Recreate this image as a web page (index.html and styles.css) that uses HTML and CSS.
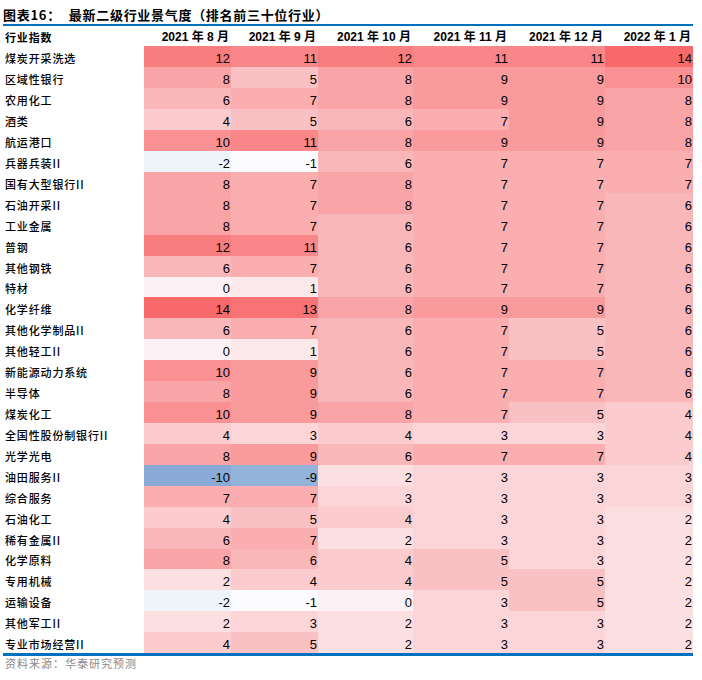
FILE: index.html
```html
<!DOCTYPE html>
<html lang="zh-CN">
<head>
<meta charset="utf-8">
<title>最新二级行业景气度</title>
<link rel="stylesheet" href="styles.css">
</head>
<body>
<div class="page">
  <div class="title"><span class="fig">图表16：</span><span>最新二级行业景气度（排名前三十位行业）</span></div>
  <div class="rule top"></div>
  <div class="grid">
    <div class="hd lb">行业指数</div><div class="hd">2021 年 8 月</div><div class="hd">2021 年 9 月</div><div class="hd">2021 年 10 月</div><div class="hd">2021 年 11 月</div><div class="hd">2021 年 12 月</div><div class="hd">2022 年 1 月</div>

    <div class="lb">煤炭开采洗选</div><div class="c v12">12</div><div class="c v11">11</div><div class="c v12">12</div><div class="c v11">11</div><div class="c v11">11</div><div class="c v14">14</div>
    <div class="lb">区域性银行</div><div class="c v8">8</div><div class="c v5">5</div><div class="c v8">8</div><div class="c v9">9</div><div class="c v9">9</div><div class="c v10">10</div>
    <div class="lb">农用化工</div><div class="c v6">6</div><div class="c v7">7</div><div class="c v8">8</div><div class="c v9">9</div><div class="c v9">9</div><div class="c v8">8</div>
    <div class="lb">酒类</div><div class="c v4">4</div><div class="c v5">5</div><div class="c v6">6</div><div class="c v7">7</div><div class="c v9">9</div><div class="c v8">8</div>
    <div class="lb">航运港口</div><div class="c v10">10</div><div class="c v11">11</div><div class="c v8">8</div><div class="c v9">9</div><div class="c v9">9</div><div class="c v8">8</div>
    <div class="lb">兵器兵装II</div><div class="c vm2">-2</div><div class="c vm1">-1</div><div class="c v6">6</div><div class="c v7">7</div><div class="c v7">7</div><div class="c v7">7</div>
    <div class="lb">国有大型银行II</div><div class="c v8">8</div><div class="c v7">7</div><div class="c v8">8</div><div class="c v7">7</div><div class="c v7">7</div><div class="c v7">7</div>
    <div class="lb">石油开采II</div><div class="c v8">8</div><div class="c v7">7</div><div class="c v8">8</div><div class="c v7">7</div><div class="c v7">7</div><div class="c v6">6</div>
    <div class="lb">工业金属</div><div class="c v8">8</div><div class="c v7">7</div><div class="c v6">6</div><div class="c v7">7</div><div class="c v7">7</div><div class="c v6">6</div>
    <div class="lb">普钢</div><div class="c v12">12</div><div class="c v11">11</div><div class="c v6">6</div><div class="c v7">7</div><div class="c v7">7</div><div class="c v6">6</div>
    <div class="lb">其他钢铁</div><div class="c v6">6</div><div class="c v7">7</div><div class="c v6">6</div><div class="c v7">7</div><div class="c v7">7</div><div class="c v6">6</div>
    <div class="lb">特材</div><div class="c v0">0</div><div class="c v1">1</div><div class="c v6">6</div><div class="c v7">7</div><div class="c v7">7</div><div class="c v6">6</div>
    <div class="lb">化学纤维</div><div class="c v14">14</div><div class="c v13">13</div><div class="c v8">8</div><div class="c v9">9</div><div class="c v9">9</div><div class="c v6">6</div>
    <div class="lb">其他化学制品II</div><div class="c v6">6</div><div class="c v7">7</div><div class="c v6">6</div><div class="c v7">7</div><div class="c v5">5</div><div class="c v6">6</div>
    <div class="lb">其他轻工II</div><div class="c v0">0</div><div class="c v1">1</div><div class="c v6">6</div><div class="c v7">7</div><div class="c v5">5</div><div class="c v6">6</div>
    <div class="lb">新能源动力系统</div><div class="c v10">10</div><div class="c v9">9</div><div class="c v6">6</div><div class="c v7">7</div><div class="c v7">7</div><div class="c v6">6</div>
    <div class="lb">半导体</div><div class="c v8">8</div><div class="c v9">9</div><div class="c v6">6</div><div class="c v7">7</div><div class="c v7">7</div><div class="c v6">6</div>
    <div class="lb">煤炭化工</div><div class="c v10">10</div><div class="c v9">9</div><div class="c v8">8</div><div class="c v7">7</div><div class="c v5">5</div><div class="c v4">4</div>
    <div class="lb">全国性股份制银行II</div><div class="c v4">4</div><div class="c v3">3</div><div class="c v4">4</div><div class="c v3">3</div><div class="c v3">3</div><div class="c v4">4</div>
    <div class="lb">光学光电</div><div class="c v8">8</div><div class="c v9">9</div><div class="c v6">6</div><div class="c v7">7</div><div class="c v7">7</div><div class="c v4">4</div>
    <div class="lb">油田服务II</div><div class="c vm10">-10</div><div class="c vm9">-9</div><div class="c v2">2</div><div class="c v3">3</div><div class="c v3">3</div><div class="c v3">3</div>
    <div class="lb">综合服务</div><div class="c v7">7</div><div class="c v7">7</div><div class="c v3">3</div><div class="c v3">3</div><div class="c v3">3</div><div class="c v3">3</div>
    <div class="lb">石油化工</div><div class="c v4">4</div><div class="c v5">5</div><div class="c v4">4</div><div class="c v3">3</div><div class="c v3">3</div><div class="c v2">2</div>
    <div class="lb">稀有金属II</div><div class="c v6">6</div><div class="c v7">7</div><div class="c v2">2</div><div class="c v3">3</div><div class="c v3">3</div><div class="c v2">2</div>
    <div class="lb">化学原料</div><div class="c v8">8</div><div class="c v6">6</div><div class="c v4">4</div><div class="c v5">5</div><div class="c v3">3</div><div class="c v2">2</div>
    <div class="lb">专用机械</div><div class="c v2">2</div><div class="c v4">4</div><div class="c v4">4</div><div class="c v5">5</div><div class="c v5">5</div><div class="c v2">2</div>
    <div class="lb">运输设备</div><div class="c vm2">-2</div><div class="c vm1">-1</div><div class="c v0">0</div><div class="c v3">3</div><div class="c v5">5</div><div class="c v2">2</div>
    <div class="lb">其他军工II</div><div class="c v2">2</div><div class="c v3">3</div><div class="c v2">2</div><div class="c v3">3</div><div class="c v3">3</div><div class="c v2">2</div>
    <div class="lb">专业市场经营II</div><div class="c v4">4</div><div class="c v5">5</div><div class="c v2">2</div><div class="c v3">3</div><div class="c v3">3</div><div class="c v2">2</div>
  </div>
  <div class="rule bottom"></div>
  <div class="source">资料来源：华泰研究预测</div>
</div>
</body>
</html>
```

FILE: styles.css
```css
* { box-sizing: border-box; }
html, body { margin: 0; padding: 0; background: #fff; }
.page {
  width: 702px;
  padding-left: 3px;
  font-family: "Liberation Sans", Arial, "Noto Sans CJK SC", sans-serif;
  color: #000;
}
.title {
  height: 24px;
  padding-top: 6px;
  line-height: 18px;
  font-family: "Noto Sans CJK SC", sans-serif;
  font-size: 13px;
  font-weight: 700;
  letter-spacing: 0.7px;
  white-space: nowrap;
}
.title .fig { margin-right: 8px; }
.rule { width: 690px; background: #0070c0; }
.rule.top { height: 2px; }
.rule.bottom { height: 3px; }
.grid {
  display: grid;
  grid-template-columns: 141px 87px 87px 95px 96px 96px 88px;
  grid-template-rows: 20.4px repeat(29, 20.93px);
}
.grid > div {
  display: flex;
  align-items: flex-end;
  white-space: nowrap;
  line-height: 15px;
}
.hd {
  justify-content: flex-end;
  padding-right: 2px;
  padding-bottom: 1px;
  font-size: 12px;
  font-weight: 700;
}
.lb {
  padding-left: 2px;
  padding-bottom: 1px;
  font-family: "Noto Sans CJK SC", sans-serif;
  font-size: 11px;
  font-weight: 500;
  letter-spacing: 0.85px;
}
.hd.lb { font-weight: 700; justify-content: flex-start; padding-right: 0; }
.c {
  justify-content: flex-end;
  padding-right: 1px;
  padding-bottom: 1px;
  font-size: 13px;
}
.source {
  padding-left: 2px;
  line-height: 14px;
  font-family: "Noto Sans CJK SC", sans-serif;
  font-size: 11px;
  letter-spacing: 1px;
  color: #8a8a8a;
}
.v14 { background: #f8696b; }
.v13 { background: #f87375; }
.v12 { background: #f87d7f; }
.v11 { background: #f98689; }
.v10 { background: #f99093; }
.v9 { background: #f99a9c; }
.v8 { background: #f9a4a6; }
.v7 { background: #faaeb0; }
.v6 { background: #fab7ba; }
.v5 { background: #fac1c4; }
.v4 { background: #fbcbce; }
.v3 { background: #fbd5d8; }
.v2 { background: #fbdfe1; }
.v1 { background: #fbe8eb; }
.v0 { background: #fcf2f5; }
.vm1 { background: #fcfcff; }
.vm2 { background: #eff3fa; }
.vm9 { background: #94b3db; }
.vm10 { background: #89aad6; }
```
